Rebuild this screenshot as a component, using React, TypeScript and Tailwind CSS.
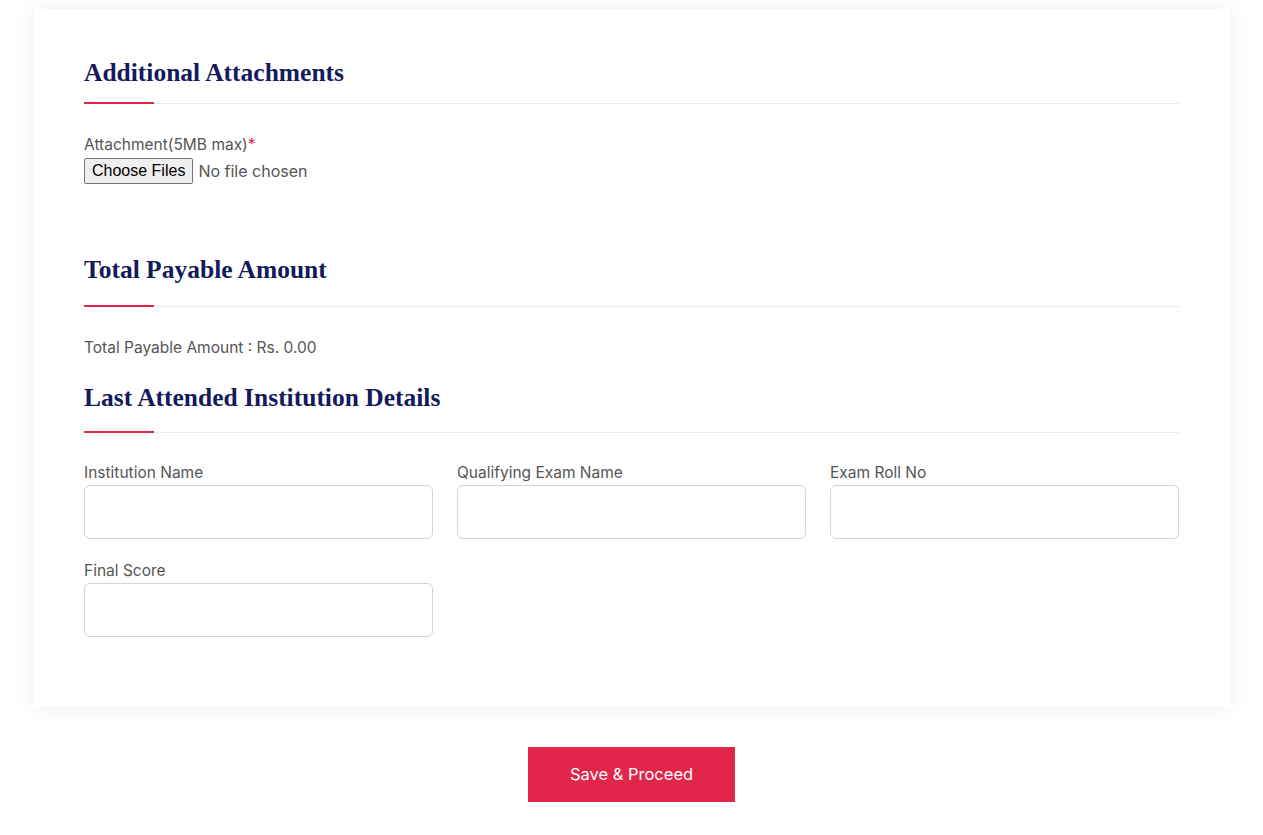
import React from "react";

const bodyFont = { fontFamily: "Inter, 'Noto Sans', sans-serif" };

function SectionHeading({ title, gap }: { title: string; gap: string }) {
  return (
    <div>
      <h2 className="text-[25.5px] leading-[29px] font-bold text-[#141a5c] font-['Liberation_Serif',serif]">
        {title}
      </h2>
      <div className={`relative h-px bg-[#ebebeb] ${gap}`}>
        <span className="absolute left-0 -top-px h-[2px] w-[70px] bg-[#e2264a]" />
      </div>
    </div>
  );
}

function TextField({ label }: { label: string }) {
  return (
    <div className="flex flex-col">
      <label className="text-[15.5px] leading-[22px] text-[#555]">{label}</label>
      <input
        type="text"
        className="mt-[1px] h-[54px] w-full rounded-[6px] border border-[#d3d3d3] bg-white px-3 outline-none"
      />
    </div>
  );
}

export default function App() {
  return (
    <div className="min-h-screen bg-white pl-[34px] pr-[33px] pt-[9px]" style={bodyFont}>
      {/* form card */}
      <div className="bg-white pl-[50px] pr-[51px] pt-[49px] pb-[70px] shadow-[0_0_22px_rgba(0,0,0,0.07)]">
        <SectionHeading title="Additional Attachments" gap="mt-[16px]" />

        <div className="mt-[30px]">
          <p className="text-[15.5px] leading-[22px] text-[#555]">
            Attachment(5MB max)<span className="text-[#e2264a]">*</span>
          </p>
          <label className="mt-[2px] flex items-center gap-[5px] cursor-pointer">
            <span className="h-[26px] flex items-center rounded-[2px] border border-[#767676] bg-[#efefef] px-[7px] text-[16px] text-black font-['Liberation_Sans',sans-serif]">
              Choose Files
            </span>
            <span className="text-[16px] text-[#555]">No file chosen</span>
            <input type="file" multiple className="hidden" />
          </label>
        </div>

        <div className="mt-[71px]">
          <SectionHeading title="Total Payable Amount" gap="mt-[22px]" />
        </div>

        <p className="mt-[30px] text-[15.5px] leading-[22px] text-[#555]">
          Total Payable Amount : Rs. 0.00
        </p>

        <div className="mt-[24px]">
          <SectionHeading title="Last Attended Institution Details" gap="mt-[20px]" />
        </div>

        <div className="mt-[29px] grid grid-cols-3 gap-x-[24px] gap-y-[21px]">
          <TextField label="Institution Name" />
          <TextField label="Qualifying Exam Name" />
          <TextField label="Exam Roll No" />
          <TextField label="Final Score" />
        </div>
      </div>

      <div className="flex justify-center pt-[40px] pr-px">
        <button className="h-[55px] w-[207px] bg-[#e2264a] text-[16.5px] font-normal text-white">
          Save &amp; Proceed
        </button>
      </div>
    </div>
  );
}
